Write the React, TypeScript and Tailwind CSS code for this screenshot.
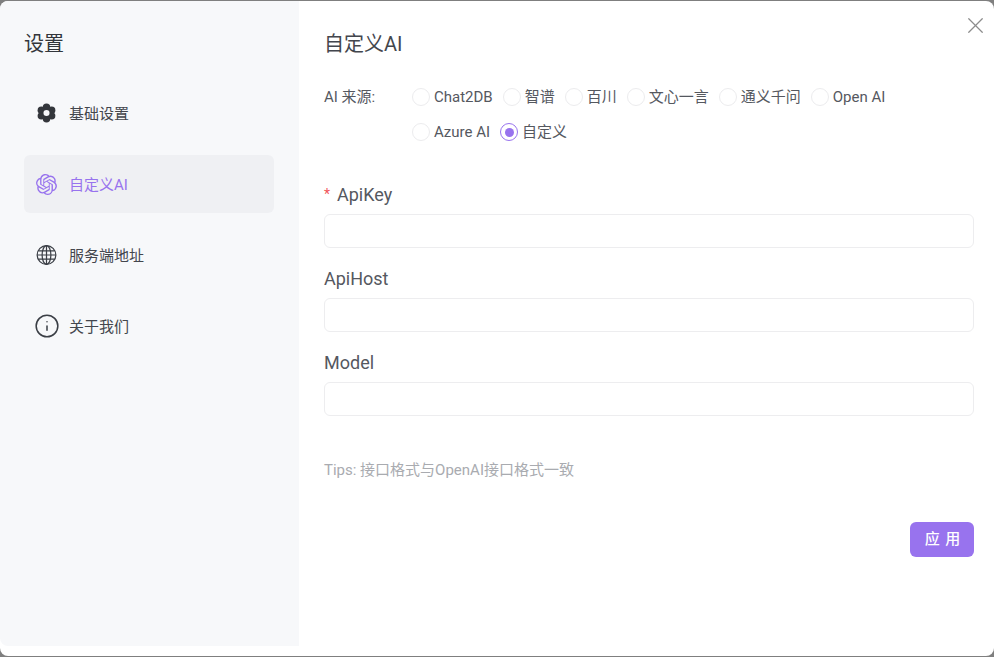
import { Info, X } from "lucide-react";
import { SiOpenai } from "react-icons/si";

const FONT = "font-['Roboto','Noto_Sans_CJK_SC',sans-serif]";

function GearIcon() {
  return (
    <svg width="22" height="22" viewBox="0 0 22 22">
      <g fill="#33363b">
        <circle cx="11" cy="11" r="7" />
        <circle cx="11" cy="5" r="3.9" />
        <circle cx="11" cy="17" r="3.9" />
        <circle cx="5.6" cy="8" r="3.9" />
        <circle cx="16.4" cy="8" r="3.9" />
        <circle cx="5.6" cy="14" r="3.9" />
        <circle cx="16.4" cy="14" r="3.9" />
      </g>
      <circle cx="11" cy="11" r="3.2" fill="#f7f8fa" />
    </svg>
  );
}

function GlobeIcon() {
  return (
    <svg
      width="22"
      height="22"
      viewBox="0 0 22 22"
      fill="none"
      stroke="#3b3f46"
      strokeWidth="1.3"
    >
      <circle cx="11" cy="11" r="9.8" />
      <ellipse cx="11" cy="11" rx="4.6" ry="9.8" />
      <path d="M11 1.2v19.6M1.2 11h19.6M2.6 6.6h16.8M2.6 15.4h16.8" />
    </svg>
  );
}

const NAV = [
  { label: "基础设置", icon: <GearIcon /> },
  { label: "自定义AI", icon: <SiOpenai size={21} />, active: true },
  { label: "服务端地址", icon: <GlobeIcon /> },
  { label: "关于我们", icon: <Info size={26} strokeWidth={1.4} className="shrink-0 text-[#3b3f46]" /> },
];

const SOURCES = ["Chat2DB", "智谱", "百川", "文心一言", "通义千问", "Open AI", "Azure AI", "自定义"];

function Radio({ label, checked }: { label: string; checked?: boolean }) {
  return (
    <label className="flex h-[18px] items-center mr-[10px]">
      <span
        className={`flex h-[18px] w-[18px] shrink-0 items-center justify-center rounded-full border bg-white ${
          checked ? "border-[#9873ee]" : "border-[#ececee]"
        }`}
      >
        {checked && <span className="h-[9px] w-[9px] rounded-full bg-[#9873ee]" />}
      </span>
      <span className="ml-[4px] text-[15px] leading-[18px] whitespace-nowrap text-[#55585f]">
        {label}
      </span>
    </label>
  );
}

function Field({ label, required }: { label: string; required?: boolean }) {
  return (
    <div className="flex flex-col">
      <div className="flex h-[34px] items-center pb-[5px] text-[18px] text-[#55585f]">
        {required && <span className="mr-[6px] w-[7px] text-[14px] text-[#f0555a]">*</span>}
        {label}
      </div>
      <input className="h-[34px] w-full rounded-md border border-[#ededef] bg-white outline-none" />
    </div>
  );
}

export default function App() {
  return (
    <div className={`${FONT} h-[657px] w-[994px] overflow-hidden bg-[#7f7f7f] py-px`}>
      <div className="relative flex h-[655px] w-full rounded-lg bg-white">
        {/* Sidebar */}
        <aside className="flex h-[645px] w-[299px] shrink-0 flex-col rounded-l-lg bg-[#f7f8fa] px-6">
          <h1 className="mt-[30px] h-[53px] text-[20px] leading-[26px] text-[#33363b]">设置</h1>
          <nav className="flex w-[250px] flex-col gap-[13px]">
            {NAV.map((item) => (
              <div
                key={item.label}
                className={`flex h-[58px] items-center gap-[12px] rounded-md pl-[12px] text-[15px] ${
                  item.active ? "bg-[#eff0f3] text-[#9873ee]" : "text-[#43464d]"
                }`}
              >
                <span className="flex w-[21px] items-center justify-center">{item.icon}</span>
                <span className="pt-[2px]">{item.label}</span>
              </div>
            ))}
          </nav>
        </aside>

        {/* Content */}
        <main className="flex flex-1 flex-col pl-[25px] pr-5">
          <h2 className="mt-[30px] text-[20px] leading-[26px] text-[#43464d]">自定义AI</h2>

          <div className="mt-[31px] flex">
            <span className="w-[88px] shrink-0 text-[15px] leading-[18px] text-[#55585f]">AI 来源:</span>
            <div className="flex w-[500px] flex-wrap gap-y-[17px]">
              {SOURCES.map((s) => (
                <Radio key={s} label={s} checked={s === "自定义"} />
              ))}
            </div>
          </div>

          <div className="mt-[39px] flex flex-col gap-[16px]">
            <Field label="ApiKey" required />
            <Field label="ApiHost" />
            <Field label="Model" />
          </div>

          <p className="mt-[44px] text-[15px] leading-5 text-[#a9abb0]">Tips: 接口格式与OpenAI接口格式一致</p>

          <div className="mt-[42px] flex justify-end">
            <button className="h-[35px] w-16 rounded-md bg-[#9873ee] pl-[2px] text-[15px] font-medium tracking-[1px] text-white">
              应 用
            </button>
          </div>
        </main>

        <button className="absolute top-[11px] right-[5px] text-[#8c8c8c]">
          <X size={27} strokeWidth={1.1} />
        </button>
      </div>
    </div>
  );
}
